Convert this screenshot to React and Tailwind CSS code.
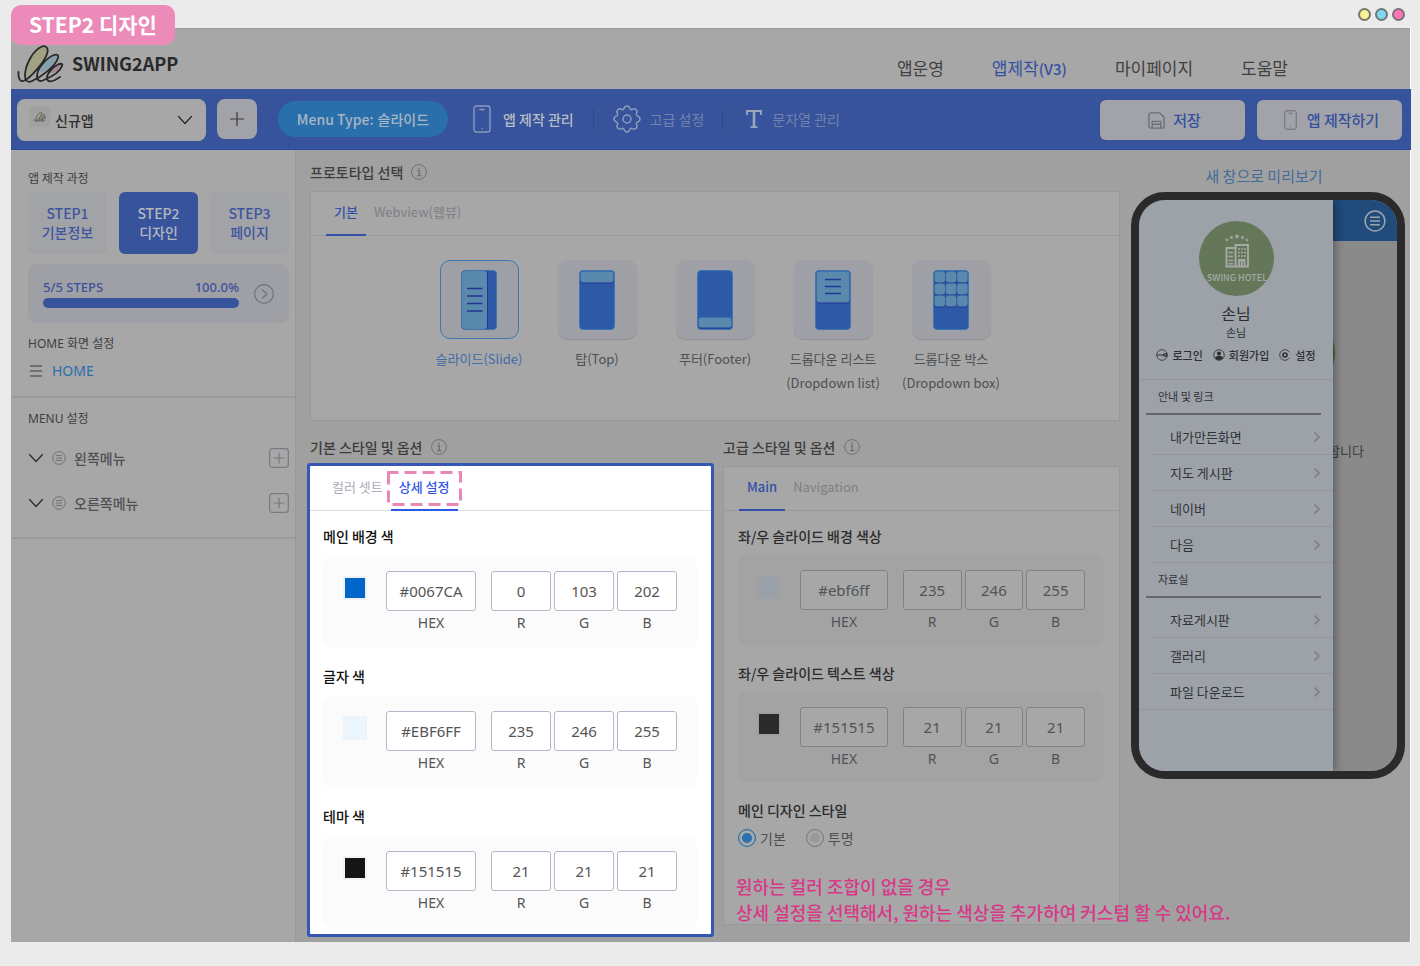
import React from "react";

const LATIN = "font-['Noto_Sans','Noto_Sans_CJK_KR',sans-serif]";

function Scribble({ className }) {
  return (
    <svg className={className} viewBox="0 0 47 39" fill="none" stroke="#29292a" strokeWidth="1.800" strokeLinecap="round">
      <path d="M11 33C8 22 17 5 25 1.500c4-1.500 7 1.500 5 7.500-3 8-12 19-19 24z" fill="#a0a283" stroke="none" />
      <path d="M23 27c1-7 8-15 14-17 3-1 5 0 4 3-3 7-11 13-18 14z" fill="#86a1ad" stroke="none" />
      <path d="M32 29c2-5 6-8 9-9.500 3-1.500 5-.5 4 1.500-2 4-8 7-13 8z" fill="#a68c92" stroke="none" />
      <path d="M1.500 27C1 33 3 37 6.500 36 14 33 27 17 30 9c2-6-1-9-5-7.500C16 5 8 20 8 31c0 5 3 7 7 5 9-4 23-14 26-23 1-3-1-4-4-3-8 3-17 14-17 21 0 5 3 6 7 4 7-3 16-8 18-14 1-2-1-3-4-1.500-5 2.500-11 8.500-11 13.500 0 4 4 4 8 2l5-3" />
    </svg>
  );
}

function PhoneIcon({ className }) {
  return (
    <svg className={className} viewBox="0 0 18 28" fill="none" stroke="currentColor" strokeWidth="1.400" strokeLinecap="round">
      <rect x="1" y="1" width="16" height="26" rx="2.500" />
      <path d="M7 4.500h4M9 23.200v.3" />
    </svg>
  );
}

function GearIcon({ className }) {
  return (
    <svg className={className} viewBox="0 0 28 28" fill="none" stroke="currentColor" strokeWidth="1.500" strokeLinejoin="round">
      <path d="M11 3.600C11.600 1.600 12.600 1 14 1s2.400.600 3 2.600c.3.900 1.300 1.300 2.200.8 1.900-1 3-.7 4 .3s1.300 2.100.3 4c-.5.9-.1 1.900.8 2.200C26.400 11.500 27 12.600 27 14s-.6 2.500-2.700 3.100c-.9.3-1.300 1.300-.8 2.200 1 1.900.7 3-.3 4s-2.100 1.300-4 .3c-.9-.5-1.900-.1-2.200.8C16.400 26.400 15.400 27 14 27s-2.400-.6-3-2.600c-.3-.9-1.300-1.300-2.200-.8-1.900 1-3 .7-4-.3s-1.300-2.100-.3-4c.5-.9.1-1.900-.8-2.200C1.600 16.500 1 15.400 1 14s.6-2.500 2.700-3.100c.9-.3 1.300-1.300.8-2.200-1-1.900-.7-3 .3-4s2.100-1.300 4-.3c.9.500 1.900.1 2.200-.8z" />
      <circle cx="14" cy="14" r="4" />
    </svg>
  );
}

function SerifT({ className }) {
  return (
    <svg className={className} viewBox="0 0 18 20" fill="none" stroke="currentColor" strokeWidth="1.800">
      <path d="M2 6V2h14v4M5.500 18.200h7" />
      <path d="M9 2v16" strokeWidth="2.600" />
    </svg>
  );
}

function SaveIcon({ className }) {
  return (
    <svg className={className} viewBox="0 0 18 18" fill="none" stroke="currentColor" strokeWidth="1.400" strokeLinejoin="round">
      <path d="M3 1h9.500L17 5.500V15a2 2 0 0 1-2 2H3a2 2 0 0 1-2-2V3a2 2 0 0 1 2-2z" />
      <path d="M4.500 17v-7h9v7M4.500 13h9" />
    </svg>
  );
}

function Chevron({ className }) {
  return (
    <svg className={className} viewBox="0 0 16 10" fill="none" stroke="currentColor" strokeWidth="1.300" strokeLinecap="round">
      <path d="M1.500 1.500 8 8.500l6.500-7" />
    </svg>
  );
}

function ChevronRight({ className }) {
  return (
    <svg className={className} viewBox="0 0 8 12" fill="none" stroke="currentColor" strokeWidth="1.600">
      <path d="m1.500 1.500 4.500 4.500-4.500 4.500" />
    </svg>
  );
}

function InfoIcon() {
  return (
    <svg className="size-4" viewBox="0 0 16 16" fill="none" stroke="#6f7178" strokeWidth="1">
      <circle cx="8" cy="8" r="7.400" />
      <path d="M6.500 6.600H8.300v5M6 11.700h4.500" strokeWidth="1.300" />
      <circle cx="8" cy="4.300" r=".9" fill="#6f7178" stroke="none" />
    </svg>
  );
}

function ListCircle({ className }) {
  return (
    <svg className={className} viewBox="0 0 20 20" fill="none" stroke="currentColor" strokeWidth="1.400">
      <circle cx="10" cy="10" r="9" />
      <path d="M5.500 6.500h9M5.500 10h9M5.500 13.500h9" />
    </svg>
  );
}

function PlusBox() {
  return (
    <svg className="size-5" viewBox="0 0 20 20" fill="none" stroke="#777b83" strokeWidth="1.200" strokeLinecap="round">
      <rect x=".7" y=".7" width="18.600" height="18.600" rx="2.500" />
      <path d="M10 5v10M5 10h10" />
    </svg>
  );
}

const protoShapes = {
  slide: (
    <>
      <rect x="1" y="1" width="26" height="58" rx="3" fill="#243792" />
      <rect x="1" y="1" width="25" height="58" rx="3" fill="#5a89ae" />
      <path d="M6 18.500h15.500M6 26h15.500M6 33.500h15.500M6 41h15.500" stroke="#243792" strokeWidth="1.500" />
    </>
  ),
  top: (
    <>
      <rect x="1.500" y="2" width="33" height="11.500" rx="3" fill="#243792" />
      <rect x="1.500" y="1.500" width="33" height="11" rx="3" fill="#5a89ae" />
    </>
  ),
  footer: (
    <>
      <rect x="1.500" y="48" width="33" height="10.500" rx="2.500" fill="#243792" />
      <rect x="1.500" y="47.500" width="33" height="10" rx="2.500" fill="#5a89ae" />
    </>
  ),
  list: (
    <>
      <rect x="1.500" y="2" width="33" height="31.500" rx="3" fill="#243792" />
      <rect x="1.500" y="1.500" width="33" height="31" rx="3" fill="#5a89ae" />
      <path d="M10 9.500h16M10 16.500h16M10 23.500h16" stroke="#243792" strokeWidth="1.500" />
    </>
  ),
  box: (
    <>
      {[0, 1, 2].map((r) =>
        [0, 1, 2].map((c) => (
          <g key={`${r}-${c}`}>
            <rect x={1.5 + c * 11.3} y={2.5 + r * 12} width="10.600" height="11" rx="3" fill="#243792" />
            <rect x={1.5 + c * 11.3} y={1.5 + r * 12} width="10.600" height="11" rx="3" fill="#5a89ae" />
          </g>
        ))
      )}
    </>
  ),
};

function ProtoIcon({ kind }) {
  return (
    <svg className="h-[60px] w-9" viewBox="0 0 36 60">
      <rect x=".5" y=".5" width="35" height="59" rx="3.500" fill="#2d59a6" stroke="#3b78b3" />
      {protoShapes[kind]}
    </svg>
  );
}

const protos = [
  { kind: "slide", lines: ["슬라이드(Slide)"], on: true },
  { kind: "top", lines: ["탑(Top)"] },
  { kind: "footer", lines: ["푸터(Footer)"] },
  { kind: "list", lines: ["드롭다운 리스트", "(Dropdown list)"] },
  { kind: "box", lines: ["드롭다운 박스", "(Dropdown box)"] },
];

function SectionTitle({ children }) {
  return (
    <h2 className="flex h-5 items-center gap-2 text-sm leading-5 font-medium text-[#3d3d3e]">
      {children}
      <InfoIcon />
    </h2>
  );
}

function DimTab({ active, children }) {
  return (
    <button
      type="button"
      className={
        active
          ? "-mb-px border-b-2 border-[#3450a8] px-2 pb-[2px] text-[13px] font-medium text-[#3450a8]"
          : "-mb-px border-b-2 border-transparent px-2 pb-[2px] text-[13px] text-[#7c7f85]"
      }
    >
      {children}
    </button>
  );
}

const dimStyle = {
  title: "mb-[9px] text-sm leading-5 font-medium text-[#2b2b2c]",
  block: "flex h-[90px] items-start rounded-lg bg-[#a3a3a3] pt-[15px] pr-[19px] pl-[19px]",
  input: "h-10 w-full min-w-0 rounded-[3px] border border-[#80828b] bg-[#a7a7a7] text-center text-[15px] text-[#505457] outline-none",
  label: "text-center text-sm leading-5 text-[#505457]",
};
const litStyle = {
  title: "mb-[10px] text-sm leading-5 font-medium text-[#111]",
  block: "flex h-[92px] items-start rounded-lg bg-[#fbfbfb] pt-[15px] pr-5 pl-5",
  input: "h-10 w-full min-w-0 rounded-[3px] border border-[#b5b8c8] bg-white text-center text-[15px] text-[#555] outline-none",
  label: "text-center text-sm leading-5 text-[#555]",
};

function ColorField({ title, swatch, border, values, lit }) {
  const s = lit ? litStyle : dimStyle;
  return (
    <section>
      <h3 className={s.title}>{title}</h3>
      <div className={`${s.block} ${LATIN}`}>
        <span className="mt-[5px] mr-[19px] size-6 shrink-0 border-2" style={{ background: swatch, borderColor: border }} />
        <div className="grid flex-1 grid-cols-[102fr_60fr_60fr_60fr] gap-x-[3px]">
          {values.map((v, i) => (
            <label key={i} className={i === 0 ? "mr-3 flex flex-col gap-[2px]" : "flex flex-col gap-[2px]"}>
              <input className={s.input} defaultValue={v} />
              <span className={s.label}>{["HEX", "R", "G", "B"][i]}</span>
            </label>
          ))}
        </div>
      </div>
    </section>
  );
}

function MenuList({ title, items, last }) {
  return (
    <section>
      <h4 className="mr-3 ml-[7px] flex h-[35px] items-center border-b-2 border-[#63666a] pl-3 text-[11px] text-[#303336]">{title}</h4>
      <ul className={last ? "border-b border-[#92969b] pt-1" : "pt-1"}>
        {items.map((t, i) => (
          <li key={t} className={last && i === items.length - 1 ? "ml-3" : "ml-3 border-b border-[#92969b]"}>
            <a href="#menu" className="flex h-[35px] items-center justify-between pr-3 pl-[19px] text-[13px] text-[#303336]">
              {t}
              <ChevronRight className="h-3 w-2 text-[#7b7e82]" />
            </a>
          </li>
        ))}
      </ul>
    </section>
  );
}

function HotelLogo() {
  return (
    <svg className="size-[75px]" viewBox="0 0 75 75">
      <circle cx="37.500" cy="37.500" r="37.500" fill="#647859" />
      <g fill="#a5a8a6">
        {[[28, 19, 2], [32.5, 16.5, 2.3], [38, 15.5, 2.9], [43.5, 16.5, 2.3], [48, 19, 2]].map(([x, y, r], i) => (
          <path
            key={i}
            transform={`translate(${x} ${y}) scale(${r})`}
            d="M0-1 .26-.35.95-.31.42.13.59.81 0 .44-.59.81-.42.13-.95-.31-.26-.35z"
          />
        ))}
      </g>
      <g fill="none" stroke="#a5a8a6" strokeWidth="1.900">
        <path d="M36 27h-8.500v18.500H49V24H36.500v21.500M40 45v-6h5.500v6M42.700 39v6" />
        <path d="M29.500 31.500h4.500M29.500 35.500h4.500M29.500 39.500h4.500M29.500 42.800h4.500M39 28h2M42 28h2M45 28h2M39 31.500h2M42 31.500h2M45 31.500h2M39 35h2M42 35h2M45 35h2" strokeWidth="1.600" />
      </g>
      <text x="38" y="60" textAnchor="middle" fontSize="9" fontWeight="500" fill="#a5a8a6" fontFamily="Noto Sans CJK KR, sans-serif">
        SWING HOTEL
      </text>
    </svg>
  );
}

function PhonePreview() {
  return (
    <div className="relative h-[587px] overflow-hidden rounded-[34px] border-[8px] border-[#2a2a2b] bg-[#8a8a8a]">
      <div className="flex h-[41px] items-center justify-end bg-[#204b7b] pr-[11px]">
        <ListCircle className="size-[22px] text-[#9ca4ad]" />
      </div>
      <div className="absolute top-[115px] left-[120px] size-[76px] rounded-full bg-[#4f6146]" />
      <p className="absolute top-[241px] right-[33px] text-[13px] leading-5 text-[#3c3c3c]">환영합니다</p>
      <div className="absolute inset-y-0 left-0 w-[194px] bg-[#9da2a9] shadow-[3px_0_8px_rgba(0,0,0,0.3)]">
        <div className="flex h-[180px] flex-col items-center border-b border-[#92969b] pt-[21px] text-[#2c2f32]">
          <HotelLogo />
          <p className="mt-[7px] text-base leading-5">손님</p>
          <p className="text-[11px] leading-[18px]">손님</p>
          <div className="mt-1 flex items-center gap-[10px] text-[11px] leading-5 font-medium">
            <a href="#login" className="flex items-center gap-1">
              <svg className="size-3" viewBox="0 0 12 12" fill="none" stroke="currentColor" strokeWidth=".8">
                <circle cx="6" cy="6" r="5.300" />
                <path d="M1 6h6M7 6l1.500-1.200h2v2.400h-2z" strokeWidth="1.200" />
              </svg>
              로그인
            </a>
            <a href="#join" className="flex items-center gap-1">
              <svg className="size-3" viewBox="0 0 12 12" fill="none" stroke="currentColor" strokeWidth=".8">
                <circle cx="6" cy="6" r="5.300" />
                <circle cx="6" cy="4.500" r="2" fill="currentColor" stroke="none" />
                <path d="M2 9c1-3 7-3 8 0-1 2.500-7 2.500-8 0z" fill="currentColor" stroke="none" />
              </svg>
              회원가입
            </a>
            <a href="#settings" className="flex items-center gap-1">
              <svg className="size-3" viewBox="0 0 12 12" fill="none" stroke="currentColor" strokeWidth=".8">
                <path d="M10.500 3.200a5.300 5.300 0 1 0 0 5.600" />
                <circle cx="6" cy="6" r="2" strokeWidth="1.600" />
              </svg>
              설정
            </a>
          </div>
        </div>
        <MenuList title="안내 및 링크" items={["내가만든화면", "지도 게시판", "네이버", "다음"]} />
        <MenuList title="자료실" items={["자료게시판", "갤러리", "파일 다운로드"]} last />
      </div>
    </div>
  );
}

function Sidebar() {
  return (
    <aside className="w-[285px] shrink-0 border-r border-[#999] bg-[#a7a7a7]">
      <div className="border-b-2 border-[#9b9b9b] pt-[18px] pr-[6px] pb-[15px] pl-[17px]">
        <h2 className="mb-1 text-xs leading-5 text-[#3f3f40]">앱 제작 과정</h2>
        <div className="grid grid-cols-3 gap-3 text-center text-sm leading-[19px]">
          <button type="button" className="h-[62px] rounded-md bg-[#a2a3a7] font-medium text-[#3d55a0]">STEP1<br />기본정보</button>
          <button type="button" className="h-[62px] rounded-md bg-[#36539b] font-medium text-[#b4b7c0]">STEP2<br />디자인</button>
          <button type="button" className="h-[62px] rounded-md bg-[#a2a3a7] font-medium text-[#3d55a0]">STEP3<br />페이지</button>
        </div>
        <div className="mt-[10px] flex h-[59px] items-center gap-[15px] rounded-lg bg-[#9fa0a6] px-[15px]">
          <div className="flex-1">
            <div className={`flex justify-between text-[13px] leading-5 font-medium text-[#3c529c] ${LATIN}`}>
              <span>5/5 STEPS</span>
              <span>100.0%</span>
            </div>
            <div className="mt-px mb-[2px] h-[10px] rounded-full bg-[#36539b]" />
          </div>
          <button type="button" aria-label="다음 단계" className="text-[#6f7379]">
            <svg className="size-5" viewBox="0 0 20 20" fill="none" stroke="currentColor" strokeWidth="1.200">
              <circle cx="10" cy="10" r="9.300" />
              <path d="m8 5.500 5 4.500-5 4.500" />
            </svg>
          </button>
        </div>
        <h2 className={`mt-[11px] text-xs leading-5 text-[#3f3f40] ${LATIN}`}>HOME 화면 설정</h2>
        <a href="#home" className={`mt-[7px] flex items-center gap-[10px] pl-[2px] text-sm leading-5 text-[#2a6fae] ${LATIN}`}>
          <svg className="h-3 w-3" viewBox="0 0 12 12" fill="none" stroke="#3b3b3b" strokeWidth="1.200">
            <path d="M0 1h12M0 6h12M0 11h12" />
          </svg>
          HOME
        </a>
      </div>
      <div className="border-b-2 border-[#9b9b9b] pt-[11px] pr-[6px] pb-3 pl-[17px]">
        <h2 className={`mb-[6px] text-xs leading-5 text-[#3f3f40] ${LATIN}`}>MENU 설정</h2>
        {["왼쪽메뉴", "오른쪽메뉴"].map((t) => (
          <div key={t} className="flex h-[45px] items-center text-sm font-medium text-[#505054]">
            <button type="button" aria-label={`${t} 펼치기`}>
              <Chevron className="h-[10px] w-4 text-[#2b2b2c]" />
            </button>
            <ListCircle className="mr-2 ml-2 size-[14px] text-[#6f7076]" />
            <span className="flex-1">{t}</span>
            <button type="button" aria-label={`${t} 추가`}><PlusBox /></button>
          </div>
        ))}
      </div>
    </aside>
  );
}

function Toolbar() {
  return (
    <div className="-mr-px flex h-[61px] items-center border-b border-[#2d4a98] bg-[#36539b] pr-[9px] pl-[6px] text-sm">
      <div className="relative pt-px">
        <select aria-label="앱 선택" className="block h-[42px] w-[189px] appearance-none rounded-lg bg-[#a7a7a7] pl-[38px] text-sm font-medium text-[#2f2f30] outline-none">
          <option>신규앱</option>
        </select>
        <span className="pointer-events-none absolute top-[9px] left-[13px] flex size-5 items-center justify-center bg-[#a0a0a0]">
          <Scribble className="h-[10px] w-3" />
        </span>
        <Chevron className="pointer-events-none absolute top-[17px] right-[13px] h-[10px] w-4 text-[#2b2b2c]" />
      </div>
      <button type="button" aria-label="앱 추가" className="ml-[11px] flex size-10 items-center justify-center rounded-lg bg-[#a2a3a8] text-[#3b3b3d]">
        <svg className="size-4" viewBox="0 0 16 16" stroke="currentColor" strokeWidth="1.200"><path d="M8 1v14M1 8h14" /></svg>
      </button>
      <div className="ml-[21px] flex h-9 w-[170px] items-center justify-center gap-1 rounded-full bg-[#296fac] font-medium text-[#a9b6c2]">
        <span>Menu Type:</span>
        <span>슬라이드</span>
      </div>
      <nav className="ml-[25px] flex items-center">
        <a href="#manage" className="flex items-center gap-3 font-medium text-[#b9bdc7]">
          <PhoneIcon className="h-7 w-[18px] text-[#8c9bbb]" />앱 제작 관리
        </a>
        <span className="mx-[19px] h-5 w-px bg-[#264b86]" />
        <a href="#advanced" className="flex items-center gap-[9px] text-[#7283ae]">
          <GearIcon className="size-7 text-[#8c9bbb]" />고급 설정
        </a>
        <span className="mr-[22px] ml-[18px] h-5 w-px bg-[#264b86]" />
        <a href="#strings" className="flex items-center gap-[9px] text-[#7283ae]">
          <SerifT className="h-5 w-[18px] text-[#9aa8bd]" />문자열 관리
        </a>
      </nav>
      <div className="ml-auto flex gap-3 pt-[2px] text-[15px] font-medium text-[#3450a0]">
        <button type="button" className="flex h-10 w-[145px] items-center justify-center gap-2 rounded-md bg-[#a2a3a8] pl-1">
          <SaveIcon className="size-[17px] text-[#6d6f76]" />저장
        </button>
        <button type="button" className="flex h-10 w-[145px] items-center justify-center gap-[10px] rounded-md bg-[#a2a3a8] pl-1">
          <PhoneIcon className="h-5 w-[13px] text-[#6d6f76]" />앱 제작하기
        </button>
      </div>
    </div>
  );
}

export default function App() {
  return (
    <div className="relative min-h-screen bg-[#ebebeb] pr-[9px] pb-[25px] pl-[11px] font-['Noto_Sans_CJK_KR','Noto_Sans',sans-serif]">
      <div className="flex h-7 items-center justify-end gap-1 pr-[6px]">
        <span className="size-[13px] rounded-full border-2 border-[#77776f] bg-[#f8f395]" />
        <span className="size-[13px] rounded-full border-2 border-[#6f7779] bg-[#80d8f2]" />
        <span className="size-[13px] rounded-full border-2 border-[#7a7276] bg-[#ff75b9]" />
      </div>
      <div className="absolute top-[5px] left-[11px] flex h-10 w-[164px] items-center justify-center rounded-[10px] bg-[#ec8ab9] pb-[2px] text-[21px] leading-none font-bold text-white">
        STEP2 디자인
      </div>

      <div className="border-r border-white bg-[#a0a0a0]">
        <header className="flex h-[61px] items-end border-t border-[#999] bg-[#a7a7a7] pr-[122px] pb-[5px] pl-[6px]">
          <a href="#top" className="flex items-center gap-2 text-lg leading-none font-bold text-[#29292a]">
            <Scribble className="h-[39px] w-[47px]" />
            <span className="pb-1">SWING2APP</span>
          </a>
          <nav className="ml-auto flex gap-12 pb-[3px] text-[17px] leading-6 text-[#414142]">
            <a href="#operate">앱운영</a>
            <a href="#make" className="text-[#3450a0]">앱제작<span className="text-[15px] font-medium">(V3)</span></a>
            <a href="#mypage">마이페이지</a>
            <a href="#help">도움말</a>
          </nav>
        </header>
        <Toolbar />

        <div className="flex">
          <Sidebar />
          <main className="flex min-w-0 flex-1 gap-[11px] pr-[5px] pl-[14px]">
            <div className="min-w-0 flex-1 pt-3 pb-2">
              <SectionTitle>프로토타입 선택</SectionTitle>
              <section className="mt-[9px] h-[230px] border border-[#999] bg-[#a7a7a7]">
                <div className="flex h-11 border-b border-[#999] pl-[15px]">
                  <DimTab active>기본</DimTab>
                  <DimTab>Webview(웹뷰)</DimTab>
                </div>
                <div className="flex justify-center pt-6">
                  {protos.map((p) => (
                    <button
                      key={p.kind}
                      type="button"
                      className={
                        p.on
                          ? "flex w-[118px] flex-col items-center text-[13px] leading-6 text-[#3f6ba8]"
                          : "flex w-[118px] flex-col items-center text-[13px] leading-6 text-[#4d5052]"
                      }
                    >
                      <span
                        className={
                          p.on
                            ? "mb-2 flex size-[79px] items-center justify-center rounded-[10px] border border-[#3b78b3] bg-[#9fa0a6]"
                            : "mb-2 flex size-[79px] items-center justify-center rounded-[10px] bg-[#9fa0a6] shadow-[0_1px_1px_#8f9096]"
                        }
                      >
                        <ProtoIcon kind={p.kind} />
                      </span>
                      {p.lines.map((l) => <span key={l}>{l}</span>)}
                    </button>
                  ))}
                </div>
              </section>

              <div className="mt-4 grid grid-cols-[401fr_397fr] items-start gap-x-3">
                <div>
                  <SectionTitle>기본 스타일 및 옵션</SectionTitle>
                  <section className="mt-[9px] rounded-[1px] bg-white ring-3 ring-[#3557b5]">
                    <div className="flex h-[45px] border-b border-[#d9dbe6] pl-[14px] text-[13px]">
                      <button type="button" className="px-2 pb-[2px] text-[#a9acb8]">컬러 셋트</button>
                      <button type="button" className="relative -mb-px border-b-2 border-[#2b5ae0] px-2 pb-[2px] font-medium text-[#2f55e6]">
                        상세 설정
                        <svg className="absolute top-[5px] -left-1 h-[35px] w-[75px]" viewBox="0 0 75 35" fill="none" stroke="#ea86b8" strokeWidth="3">
                          <rect x="1.500" y="1.500" width="72" height="32" strokeDasharray="12 6" strokeDashoffset="2" />
                        </svg>
                      </button>
                    </div>
                    <div className="flex flex-col gap-[18px] px-[14px] pt-[15px] pb-[6px] pl-[13px]">
                      <ColorField lit title="메인 배경 색" swatch="#0067ca" border="#eff1f4" values={["#0067CA", "0", "103", "202"]} />
                      <ColorField lit title="글자 색" swatch="#ebf6ff" border="#eff3f6" values={["#EBF6FF", "235", "246", "255"]} />
                      <ColorField lit title="테마 색" swatch="#151515" border="#f3f3f3" values={["#151515", "21", "21", "21"]} />
                    </div>
                  </section>
                </div>

                <div>
                  <SectionTitle>고급 스타일 및 옵션</SectionTitle>
                  <section className="relative mt-[9px] h-[459px] border border-[#999] bg-[#a7a7a7]">
                    <div className="flex h-11 border-b border-[#999] pl-[15px]">
                      <DimTab active>Main</DimTab>
                      <DimTab>Navigation</DimTab>
                    </div>
                    <div className="flex flex-col gap-[18px] pt-[15px] pr-[15px] pl-[14px]">
                      <ColorField title="좌/우 슬라이드 배경 색상" swatch="#9aa1a8" border="#9ea2a6" values={["#ebf6ff", "235", "246", "255"]} />
                      <ColorField title="좌/우 슬라이드 텍스트 색상" swatch="#2a2a2a" border="#9f9f9f" values={["#151515", "21", "21", "21"]} />
                      <fieldset>
                        <legend className="mb-2 text-sm leading-5 font-medium text-[#2b2b2c]">메인 디자인 스타일</legend>
                        <div className="flex gap-5 text-sm leading-5 text-[#505054]">
                          <label className="flex items-center gap-1">
                            <input type="radio" name="style" defaultChecked className="size-[18px] appearance-none rounded-full border border-[#2a6fae] bg-[#2a6fae] shadow-[inset_0_0_0_3px_#a7a7a7]" />
                            기본
                          </label>
                          <label className="flex items-center gap-1">
                            <input type="radio" name="style" className="size-[18px] appearance-none rounded-full border border-[#777980] bg-[#999] shadow-[inset_0_0_0_3px_#a7a7a7]" />
                            투명
                          </label>
                        </div>
                      </fieldset>
                    </div>
                    <p className="absolute top-[406px] left-3 z-10 text-lg leading-[26px] font-medium whitespace-nowrap text-[#d73888]">
                      원하는 컬러 조합이 없을 경우<br />
                      상세 설정을 선택해서, 원하는 색상을 추가하여 커스텀 할 수 있어요.
                    </p>
                  </section>
                </div>
              </div>
            </div>

            <aside className="w-[274px] shrink-0 pt-4 text-center">
              <a href="#preview" className="mb-[6px] block pr-2 text-[15px] leading-5 text-[#436b98]">새 창으로 미리보기</a>
              <PhonePreview />
            </aside>
          </main>
        </div>
      </div>
    </div>
  );
}
